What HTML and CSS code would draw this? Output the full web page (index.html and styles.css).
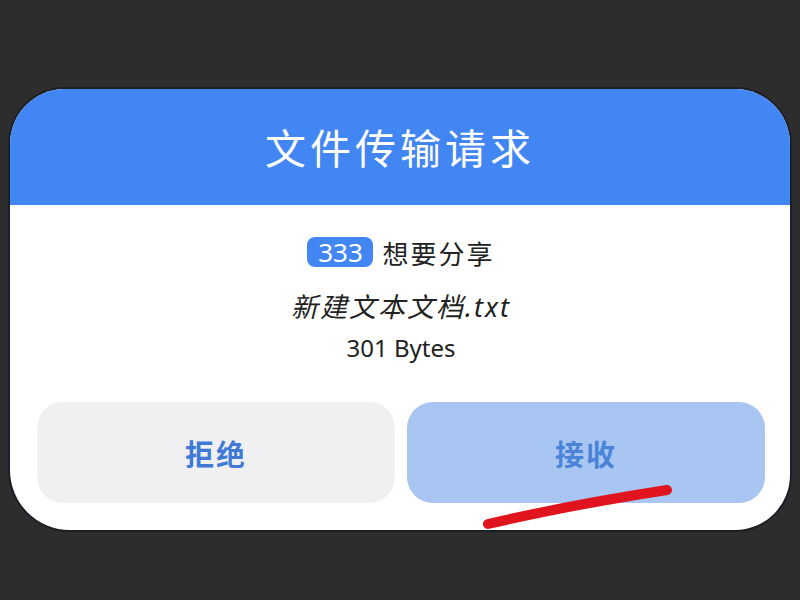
FILE: index.html
```html
<!DOCTYPE html>
<html lang="zh-CN">
<head>
<meta charset="utf-8">
<title>文件传输请求</title>
<link rel="stylesheet" href="styles.css">
</head>
<body>
<div class="stage">
  <div class="card">
    <div class="card-header">文件传输请求</div>
    <div class="card-body">
      <div class="sender"><span class="badge">333</span><span class="sender-text">想要分享</span></div>
      <div class="filename">新建文本文档.txt</div>
      <div class="filesize">301 Bytes</div>
      <div class="actions">
        <button class="btn btn-reject">拒绝</button>
        <button class="btn btn-accept">接收</button>
      </div>
    </div>
  </div>
  <svg class="scribble" width="800" height="600" viewBox="0 0 800 600">
    <path d="M488 524 Q570 505 667 490" fill="none" stroke="#e0141e" stroke-width="10" stroke-linecap="round"/>
  </svg>
</div>
</body>
</html>
```
FILE: styles.css
```css
html, body {
  margin: 0;
  padding: 0;
}
body {
  background: #2d2d2d;
  width: 800px;
  height: 600px;
  overflow: hidden;
  font-family: "Noto Sans", "Noto Sans CJK SC", sans-serif;
}
.stage {
  position: relative;
  width: 800px;
  height: 600px;
  padding-top: 89px;
  box-sizing: border-box;
}
.card {
  margin-left: 10px;
  width: 780px;
  background: #ffffff;
  border-radius: 55px 55px 55px 60px;
  overflow: hidden;
  box-shadow: 0 0 0 2px #1c1f26;
}
.card-header {
  height: 116px;
  background: #4286f3;
  color: #ffffff;
  font-family: "Noto Sans CJK SC", sans-serif;
  font-size: 41px;
  letter-spacing: 4px;
  display: flex;
  align-items: center;
  justify-content: center;
  padding-bottom: 2px;
  box-sizing: border-box;
}
.card-body {
  padding: 32px 25px 27px 27px;
  display: flex;
  flex-direction: column;
  align-items: center;
  color: #222222;
}
.sender {
  display: flex;
  align-items: center;
  gap: 9px;
  height: 30px;
}
.badge {
  background: #4286f3;
  color: #ffffff;
  border-radius: 8px;
  width: 66px;
  height: 30px;
  display: flex;
  align-items: center;
  justify-content: center;
  font-size: 26px;
  letter-spacing: 0;
}
.sender-text {
  font-family: "Noto Sans CJK SC", sans-serif;
  font-size: 26px;
  letter-spacing: 2px;
}
.filename {
  margin-top: 22px;
  line-height: 36px;
  font-size: 27px;
  letter-spacing: 2px;
  font-style: italic;
  font-family: "Noto Sans", "Noto Sans CJK SC", sans-serif;
}
.filesize {
  margin-top: 8px;
  line-height: 30px;
  font-size: 24px;
}
.actions {
  margin-top: 39px;
  align-self: stretch;
  display: flex;
  gap: 12px;
}
.btn {
  flex: 1;
  height: 101px;
  border: none;
  border-radius: 26px;
  font-family: "Noto Sans CJK SC", sans-serif;
  font-size: 29px;
  font-weight: 700;
  letter-spacing: 2px;
  color: #3f7ad6;
  padding: 0;
}
.btn-reject {
  background: #f0f0f2;
}
.btn-accept {
  background: #a9c6f2;
  color: #4a84d9;
}
.scribble {
  position: absolute;
  left: 0;
  top: 0;
  pointer-events: none;
}
```
